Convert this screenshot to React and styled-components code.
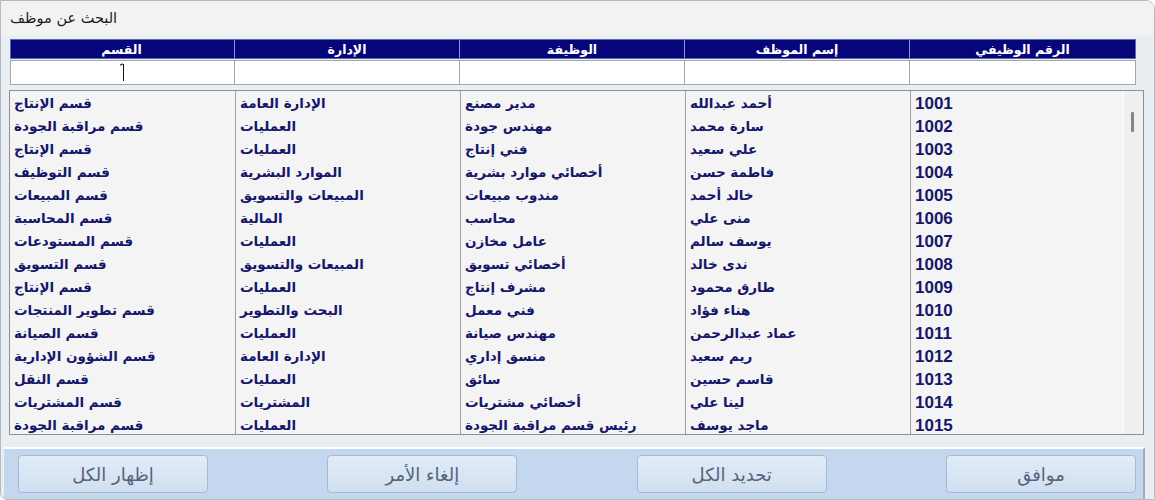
import React from 'react';
import styled, { createGlobalStyle } from 'styled-components';

const GlobalStyle = createGlobalStyle`
  html, body { margin: 0; padding: 0; background: #ffffff; }
  * { box-sizing: border-box; }
`;

const employees = [
  ['1001', 'أحمد عبدالله', 'مدير مصنع', 'الإدارة العامة', 'قسم الإنتاج'],
  ['1002', 'سارة محمد', 'مهندس جودة', 'العمليات', 'قسم مراقبة الجودة'],
  ['1003', 'علي سعيد', 'فني إنتاج', 'العمليات', 'قسم الإنتاج'],
  ['1004', 'فاطمة حسن', 'أخصائي موارد بشرية', 'الموارد البشرية', 'قسم التوظيف'],
  ['1005', 'خالد أحمد', 'مندوب مبيعات', 'المبيعات والتسويق', 'قسم المبيعات'],
  ['1006', 'منى علي', 'محاسب', 'المالية', 'قسم المحاسبة'],
  ['1007', 'يوسف سالم', 'عامل مخازن', 'العمليات', 'قسم المستودعات'],
  ['1008', 'ندى خالد', 'أخصائي تسويق', 'المبيعات والتسويق', 'قسم التسويق'],
  ['1009', 'طارق محمود', 'مشرف إنتاج', 'العمليات', 'قسم الإنتاج'],
  ['1010', 'هناء فؤاد', 'فني معمل', 'البحث والتطوير', 'قسم تطوير المنتجات'],
  ['1011', 'عماد عبدالرحمن', 'مهندس صيانة', 'العمليات', 'قسم الصيانة'],
  ['1012', 'ريم سعيد', 'منسق إداري', 'الإدارة العامة', 'قسم الشؤون الإدارية'],
  ['1013', 'قاسم حسين', 'سائق', 'العمليات', 'قسم النقل'],
  ['1014', 'لينا علي', 'أخصائي مشتريات', 'المشتريات', 'قسم المشتريات'],
  ['1015', 'ماجد يوسف', 'رئيس قسم مراقبة الجودة', 'العمليات', 'قسم مراقبة الجودة'],
];

const columns = ['الرقم الوظيفي', 'إسم الموظف', 'الوظيفة', 'الإدارة', 'القسم'];

const Window = styled.div`
  width: 1155px;
  height: 500px;
  display: flex;
  flex-direction: column;
  border: 1px solid #b4bac2;
  border-radius: 0 9px 0 7px;
  overflow: hidden;
  background: #e9eef3;
  font-family: "DejaVu Sans", sans-serif;
`;

const TitleBar = styled.div`
  height: 35px;
  flex-shrink: 0;
  display: flex;
  align-items: center;
  padding: 0 9px 2px;
  background: #f3f2f2;
  font-size: 14.5px;
  color: #1b1b1b;
`;

const Body = styled.div`
  flex: 1;
  display: flex;
  flex-direction: column;
  padding: 3px 10px 0 8px;
  direction: rtl;
`;

const HeadRow = styled.div`
  display: grid;
  grid-template-columns: 226px repeat(4, 225px);
  height: 20px;
  margin-right: 8px;
  margin-left: 1px;
  background: #06067a;
  border: 1px solid #5a6aa8;
`;

const HeadCell = styled.div`
  display: flex;
  align-items: center;
  justify-content: center;
  color: #ffffff;
  font-weight: bold;
  font-size: 12.5px;
  border-left: ${({ $last }) => ($last ? 'none' : '1px solid #8b97c6')};
`;

const FilterRow = styled.div`
  display: grid;
  grid-template-columns: 226px repeat(4, 225px);
  height: 25px;
  margin: 1px 8px 0 1px;
  background: #ffffff;
  border: 1px solid #a3a8ae;
`;

const FilterCell = styled.div`
  display: flex;
  align-items: center;
  justify-content: center;
  padding-left: 3px;
  border-left: ${({ $last }) => ($last ? 'none' : '1px solid #a3a8ae')};
`;

const Caret = styled.span`
  position: relative;
  display: inline-block;
  width: 1px;
  height: 17px;
  background: #111111;
  &::before {
    content: '';
    position: absolute;
    top: 0;
    left: -3px;
    width: 3px;
    height: 1px;
    background: #111111;
    transform: rotate(-30deg);
  }
`;

const List = styled.div`
  display: flex;
  margin-top: 5px;
  height: 345px;
  border: 1px solid #8d8f92;
  background: #f4f4f4;
`;

const Rows = styled.div`
  width: 1113px;
  overflow: hidden;
  display: grid;
  grid-template-columns: 213px repeat(4, 225px);
  grid-auto-rows: 23px;
`;

const Cell = styled.div`
  display: flex;
  align-items: center;
  justify-content: flex-end;
  padding-left: 4px;
  white-space: nowrap;
  color: #15176a;
  font-weight: bold;
  font-size: ${({ $num }) => ($num ? '17px' : '13.5px')};
  font-family: ${({ $num }) => ($num ? '"Liberation Sans", Arial, sans-serif' : '"DejaVu Sans", sans-serif')};
  padding-top: ${({ $num }) => ($num ? '2px' : '0')};
  border-left: ${({ $last }) => ($last ? 'none' : '1px solid #9d9fa2')};
`;

const ScrollTrack = styled.div`
  flex: 1;
  position: relative;
  background: #efefef;
  border-left: 1px solid #ffffff;
`;

const Thumb = styled.div`
  position: absolute;
  top: 21px;
  right: 9px;
  width: 3px;
  height: 20px;
  border-radius: 1px;
  background: #868686;
`;

const ButtonBar = styled.div`
  margin: 12px -1px 0 -5px;
  flex: 1;
  display: flex;
  justify-content: space-between;
  align-items: flex-start;
  padding: 6px 7px 0 14px;
  background: #c3d8ee;
  border-top: 2px solid #ffffff;
  border-right: 2px solid #9eaebf;
`;

const Button = styled.button`
  width: 190px;
  height: 38px;
  border: 1px solid #a6bad1;
  border-radius: 4px;
  background: linear-gradient(#e2ecf8, #cfdff1);
  color: #56647a;
  font-family: "DejaVu Sans", sans-serif;
  font-size: 18px;
  direction: rtl;
  cursor: pointer;
`;

export default function App() {
  return (
    <>
      <GlobalStyle />
      <Window>
        <TitleBar>البحث عن موظف</TitleBar>
        <Body>
          <HeadRow>
            {columns.map((c, i) => (
              <HeadCell key={c} $last={i === columns.length - 1}>{c}</HeadCell>
            ))}
          </HeadRow>
          <FilterRow>
            {columns.map((c, i) => (
              <FilterCell key={c} $last={i === columns.length - 1}>
                {i === columns.length - 1 && <Caret />}
              </FilterCell>
            ))}
          </FilterRow>
          <List>
            <ScrollTrack>
              <Thumb />
            </ScrollTrack>
            <Rows>
              {employees.map((row) =>
                row.map((value, i) => (
                  <Cell key={row[0] + i} $num={i === 0} $last={i === row.length - 1}>
                    {value}
                  </Cell>
                ))
              )}
            </Rows>
          </List>
          <ButtonBar>
            <Button>موافق</Button>
            <Button>تحديد الكل</Button>
            <Button>إلغاء الأمر</Button>
            <Button>إظهار الكل</Button>
          </ButtonBar>
        </Body>
      </Window>
    </>
  );
}
